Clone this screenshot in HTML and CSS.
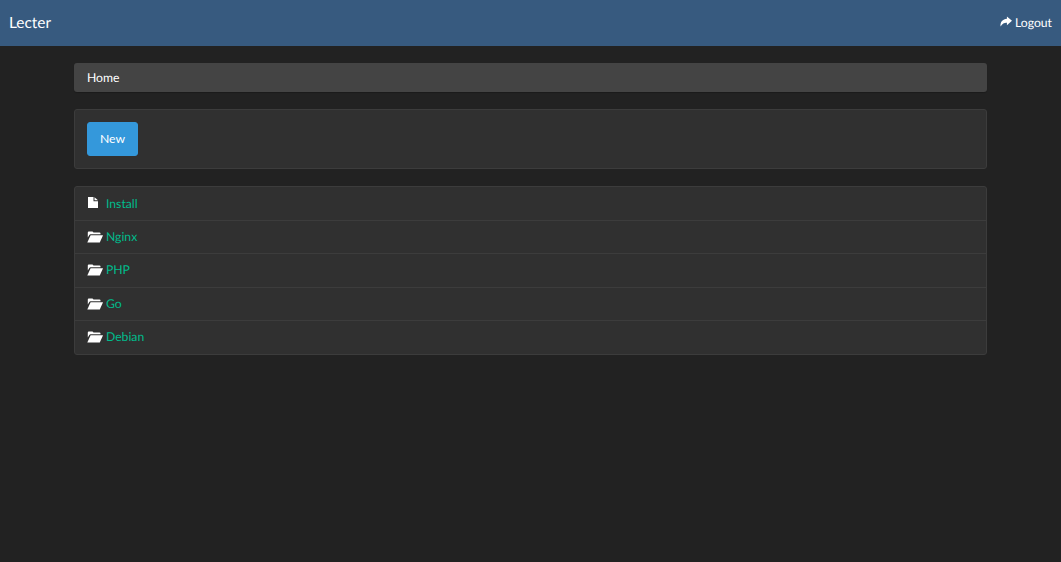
FILE: index.html
```html
<!DOCTYPE html>
<html lang="en">
<head>
    <meta charset="UTF-8">
    <title>Lecter</title>
    <link rel="stylesheet" href="styles.css">
</head>
<body>
    <nav class="navbar">
        <a class="brand" href="#">Lecter</a>
        <a class="logout" href="#">
            <svg class="icon-share" viewBox="0 0 13 11"><path fill="currentColor" d="M7.500 0 13 4.800 7.500 9.500V6.800C4.800 6.600 2.800 7.600.6 10.800 0 6 3 2.800 7.500 2.500Z"/></svg>
            Logout
        </a>
    </nav>

    <div class="container">
        <div class="breadcrumb">Home</div>

        <div class="well">
            <button class="btn">New</button>
        </div>

        <ul class="list">
            <li class="list-item">
                <svg class="icon icon-file" viewBox="0 0 10 11"><path fill="currentColor" d="M0 0H5.500V4.200H10V11H0Z"/><path fill="currentColor" d="M6.500 .2 10 3.200H6.500Z"/></svg>
                <a href="#">Install</a>
            </li>
            <li class="list-item">
                <svg class="icon" viewBox="0 0 16 12"><path fill="currentColor" d="M.8 6.500V1.500Q.8.500 1.800.500H5.500L6.500 1.500H12.500Q13.500 1.500 13.500 2.500V3.300H3.500Q2.700 3.300 2.300 4Z"/><path fill="currentColor" d="M3.600 4.300H16L12.800 11.500H.3Z"/></svg>
                <a href="#">Nginx</a>
            </li>
            <li class="list-item">
                <svg class="icon" viewBox="0 0 16 12"><path fill="currentColor" d="M.8 6.500V1.500Q.8.500 1.800.500H5.500L6.500 1.500H12.500Q13.500 1.500 13.500 2.500V3.300H3.500Q2.700 3.300 2.300 4Z"/><path fill="currentColor" d="M3.600 4.300H16L12.800 11.500H.3Z"/></svg>
                <a href="#">PHP</a>
            </li>
            <li class="list-item">
                <svg class="icon" viewBox="0 0 16 12"><path fill="currentColor" d="M.8 6.500V1.500Q.8.500 1.800.500H5.500L6.500 1.500H12.500Q13.500 1.500 13.500 2.500V3.300H3.500Q2.700 3.300 2.300 4Z"/><path fill="currentColor" d="M3.600 4.300H16L12.800 11.500H.3Z"/></svg>
                <a href="#">Go</a>
            </li>
            <li class="list-item">
                <svg class="icon" viewBox="0 0 16 12"><path fill="currentColor" d="M.8 6.500V1.500Q.8.500 1.800.500H5.500L6.500 1.500H12.500Q13.500 1.500 13.500 2.500V3.300H3.500Q2.700 3.300 2.300 4Z"/><path fill="currentColor" d="M3.600 4.300H16L12.800 11.500H.3Z"/></svg>
                <a href="#">Debian</a>
            </li>
        </ul>
    </div>
</body>
</html>
```

FILE: styles.css
```css
body {
    font-family: Lato, 'Liberation Sans', sans-serif;
    font-size: 12.2px;
    line-height: 1.42857;
    text-rendering: geometricPrecision;
    margin: 0;
    background-color: #222222;
    color: #ffffff;
}

a {
    text-decoration: none;
}

svg {
    display: block;
}

.navbar {
    display: flex;
    align-items: center;
    justify-content: space-between;
    height: 46px;
    padding: 0 9px;
    background-color: #375a7f;
}

.brand {
    color: #ffffff;
    font-size: 15.4px;
}

.logout {
    display: flex;
    align-items: center;
    gap: 3px;
    color: #ffffff;
}

.icon-share {
    width: 12px;
    height: 11px;
    margin-top: -2px;
}

.container {
    width: 913px;
    margin: 17px auto 0;
}

.breadcrumb {
    height: 29px;
    line-height: 29px;
    padding: 0 13px;
    margin-bottom: 17px;
    background-color: #444444;
    border-radius: 3px;
    box-shadow: 0 1px 1px rgba(0, 0, 0, 0.2);
}

.well {
    padding: 12px;
    margin-bottom: 17px;
    background-color: #303030;
    border: 1px solid #3c3c3c;
    border-radius: 3px;
}

.btn {
    display: block;
    width: 51px;
    height: 34px;
    padding: 0;
    font: inherit;
    color: #ffffff;
    background-color: #3498db;
    border: 1px solid #3498db;
    border-radius: 3px;
}

.list {
    list-style: none;
    margin: 0;
    padding: 0;
    background-color: #303030;
    border: 1px solid #3c3c3c;
    border-radius: 3px;
}

.list-item {
    box-sizing: border-box;
    display: flex;
    align-items: center;
    height: 33.5px;
    padding: 0 12px 1px;
    border-top: 1px solid #3c3c3c;
}

.list-item:first-child {
    height: 32.9px;
    border-top-color: transparent;
}

.list-item a {
    color: #00bc8c;
}

.icon {
    flex: none;
    width: 16px;
    height: 12px;
    margin-right: 3px;
}

.icon-file {
    width: 10px;
    height: 11px;
    margin: 0 8px 2px 1px;
}
```
